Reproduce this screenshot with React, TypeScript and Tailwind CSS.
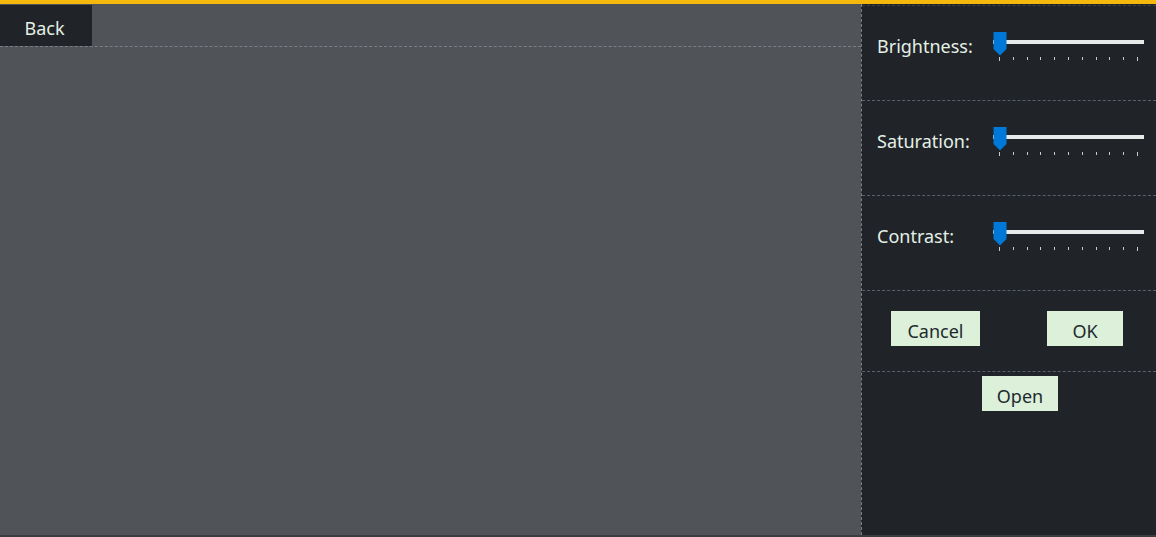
import React from "react";

const font = { fontFamily: '"Noto Sans", "Open Sans", sans-serif' };

function Slider() {
  const ticks = Array.from({ length: 11 });
  return (
    <div className="relative h-[30px] w-[151px]">
      <div className="absolute top-[8px] right-0 left-0 h-[4px] bg-[#e8eaea]" />
      <div className="absolute top-[25px] left-[6px] flex w-[139px] justify-between">
        {ticks.map((_, i) => (
          <div
            key={i}
            className={i === 0 || i === 10 ? "h-[4px] w-px bg-[#c8cccc]" : "h-[3px] w-px bg-[#c8cccc]"}
          />
        ))}
      </div>
      <svg className="absolute top-0 left-0" width="14" height="24" viewBox="0 0 14 24">
        <path d="M0.5 0 H13.5 V17 L7 23.5 L0.5 17 Z" fill="#0078d7" />
      </svg>
    </div>
  );
}

function SliderRow({ label }: { label: string }) {
  return (
    <div className="flex h-[95px] items-start border-b border-dashed border-[#59606a] pt-[26px] pl-[15px]">
      <span className="w-[116px] text-[18px] leading-[29px] text-[#e4f0e6]">{label}</span>
      <Slider />
    </div>
  );
}

function PanelButton({ label, width }: { label: string; width: string }) {
  return (
    <button className={`${width} h-[35px] bg-[#dcf0da] pt-[5px] text-[18px] leading-[26px] text-[#1e2a2e]`}>
      {label}
    </button>
  );
}

export default function App() {
  return (
    <div className="flex h-[537px] w-[1156px] flex-col overflow-hidden bg-[#202428]" style={font}>
      <div className="h-[4px] bg-[#f5b80d]" />
      <div className="flex min-h-0 flex-1">
        <main className="flex flex-1 flex-col bg-[#505458] pt-[1px]">
          <div className="h-[42px] border-b border-dashed border-[#7a7f85]">
            <button className="h-[41px] w-[92px] bg-[#202428] pt-[5px] pr-[3px] text-[18px] text-[#e4f0e6]">
              Back
            </button>
          </div>
        </main>
        <aside className="flex w-[295px] flex-col border-l border-dashed border-[#7a7f85] pt-[1px]">
          <div className="border-t border-dashed border-[#3c424a]">
            <SliderRow label="Brightness:" />
            <SliderRow label="Saturation:" />
            <SliderRow label="Contrast:" />
            <div className="flex h-[81px] items-start border-b border-dashed border-[#59606a] pt-[20px] pl-[29px]">
              <PanelButton label="Cancel" width="w-[89px]" />
              <div className="w-[67px]" />
              <PanelButton label="OK" width="w-[76px]" />
            </div>
            <div className="flex pt-[4px] pl-[120px]">
              <PanelButton label="Open" width="w-[76px]" />
            </div>
          </div>
        </aside>
      </div>
      <div className="h-[2px] bg-[#3a3e42]" />
    </div>
  );
}
